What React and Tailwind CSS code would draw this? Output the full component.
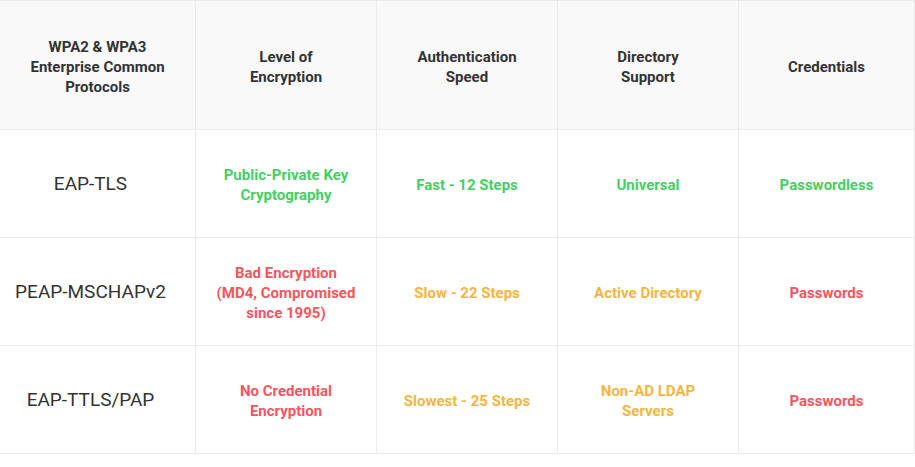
import React from 'react';

const headers = [
  ['WPA2 & WPA3', 'Enterprise Common', 'Protocols'],
  ['Level of', 'Encryption'],
  ['Authentication', 'Speed'],
  ['Directory', 'Support'],
  ['Credentials'],
];

const green = 'text-[#45cf63]';
const orange = 'text-[#f4b63f]';
const red = 'text-[#f4565f]';

const rows = [
  {
    name: 'EAP-TLS',
    cells: [
      { lines: ['Public-Private Key', 'Cryptography'], color: green },
      { lines: ['Fast - 12 Steps'], color: green },
      { lines: ['Universal'], color: green },
      { lines: ['Passwordless'], color: green },
    ],
  },
  {
    name: 'PEAP-MSCHAPv2',
    cells: [
      { lines: ['Bad Encryption', '(MD4, Compromised', 'since 1995)'], color: red },
      { lines: ['Slow - 22 Steps'], color: orange },
      { lines: ['Active Directory'], color: orange },
      { lines: ['Passwords'], color: red },
    ],
  },
  {
    name: 'EAP-TTLS/PAP',
    cells: [
      { lines: ['No Credential', 'Encryption'], color: red },
      { lines: ['Slowest - 25 Steps'], color: orange },
      { lines: ['Non-AD LDAP', 'Servers'], color: orange },
      { lines: ['Passwords'], color: red },
    ],
  },
];

function Lines({ lines }) {
  return lines.map((l, i) => <div key={i}>{l}</div>);
}

export default function App() {
  return (
    <div className="w-[915px] h-[467px] bg-white overflow-hidden" style={{ fontFamily: 'Roboto, "Liberation Sans", sans-serif' }}>
      <div className="grid grid-cols-[196px_181px_181px_181px_1fr] border-t border-[#ebebeb]">
        {headers.map((h, i) => (
          <div
            key={i}
            className="h-[129px] pt-[3px] bg-[#f9f9f9] border-b border-r border-[#ebebeb] flex flex-col items-center justify-center text-center text-[15px] leading-[20px] font-bold text-[#333333]"
          >
            <Lines lines={h} />
          </div>
        ))}
        {rows.map((r) => (
          <React.Fragment key={r.name}>
            <div className="h-[108px] pt-[2px] border-b border-r border-[#ebebeb] flex items-center justify-center pr-[14px] text-[19px] text-[#333333]">
              {r.name}
            </div>
            {r.cells.map((c, j) => (
              <div
                key={j}
                className={`h-[108px] pt-[2px] border-b border-r border-[#ebebeb] flex flex-col items-center justify-center text-center text-[15px] leading-[20px] font-bold ${c.color}`}
              >
                <Lines lines={c.lines} />
              </div>
            ))}
          </React.Fragment>
        ))}
      </div>
    </div>
  );
}
